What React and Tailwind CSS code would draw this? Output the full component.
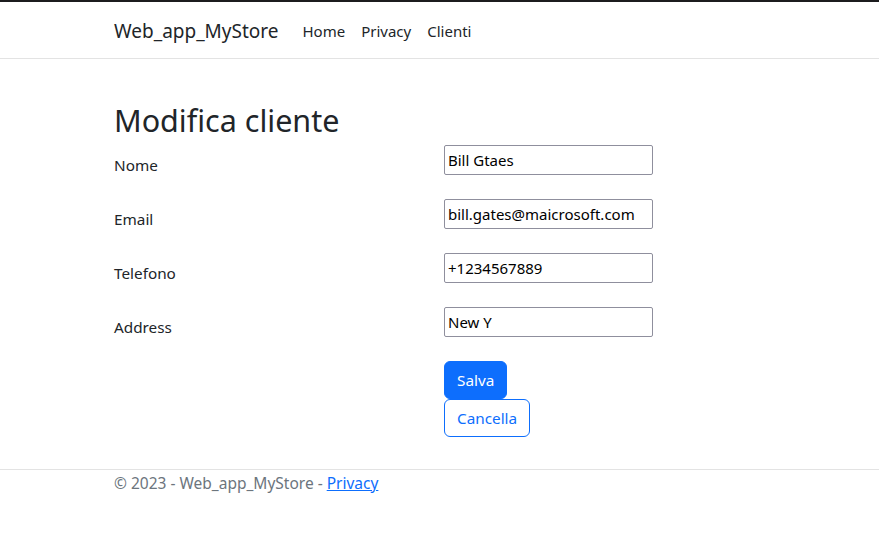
const fields = [
  { label: "Nome", value: "Bill Gtaes" },
  { label: "Email", value: "bill.gates@maicrosoft.com" },
  { label: "Telefono", value: "+1234567889" },
  { label: "Address", value: "New Y" },
];

function Header() {
  return (
    <header className="h-[59px] border-t-2 border-t-[#1c1c1e] border-b border-b-[#e3e3e3] bg-white">
      <nav className="flex h-full items-center pl-[114px] pt-[3px]">
        <a className="mr-[16px] text-[19px] text-[#212529]">Web_app_MyStore</a>
        <ul className="flex text-[15px] text-[#212529]">
          <li className="px-[8px]">Home</li>
          <li className="px-[8px]">Privacy</li>
          <li className="px-[8px]">Clienti</li>
        </ul>
      </nav>
    </header>
  );
}

function EditForm() {
  return (
    <main className="pl-[114px] pt-[43px]">
      <h1 className="mb-[6px] text-[30.5px] leading-[1.2] text-[#212529]">Modifica cliente</h1>
      <form className="flex flex-col gap-[24px]">
        {fields.map((field) => (
          <div key={field.label} className="flex h-[30px]">
            <label className="w-[330px] pt-[8px] text-[15.3px] leading-6 text-[#212529]">
              {field.label}
            </label>
            <input
              defaultValue={field.value}
              className="h-[30px] w-[209px] rounded-[2px] border border-[#8f8f9d] px-[3px] text-[15px] text-black outline-none"
            />
          </div>
        ))}
        <div className="flex">
          <div className="w-[330px]" />
          <div className="flex flex-col items-start">
            <button
              type="button"
              className="h-[38px] rounded-[6px] border border-[#0d6efd] bg-[#0d6efd] px-[12px] pt-[1px] text-[15.3px] text-white"
            >
              Salva
            </button>
            <button
              type="button"
              className="h-[38px] rounded-[6px] border border-[#0d6efd] bg-white px-[12px] pt-[1px] text-[15.3px] text-[#0d6efd]"
            >
              Cancella
            </button>
          </div>
        </div>
      </form>
    </main>
  );
}

function Footer() {
  return (
    <footer className="mt-[32px] border-t border-t-[#e3e3e3] pl-[114px] text-[15.5px] leading-[26px] text-[#6c757d]">
      © 2023 - Web_app_MyStore - <a className="text-[#0d6efd] underline">Privacy</a>
    </footer>
  );
}

export default function App() {
  return (
    <div className="min-h-[547px] bg-white font-['Noto_Sans',sans-serif]">
      <Header />
      <EditForm />
      <Footer />
    </div>
  );
}
